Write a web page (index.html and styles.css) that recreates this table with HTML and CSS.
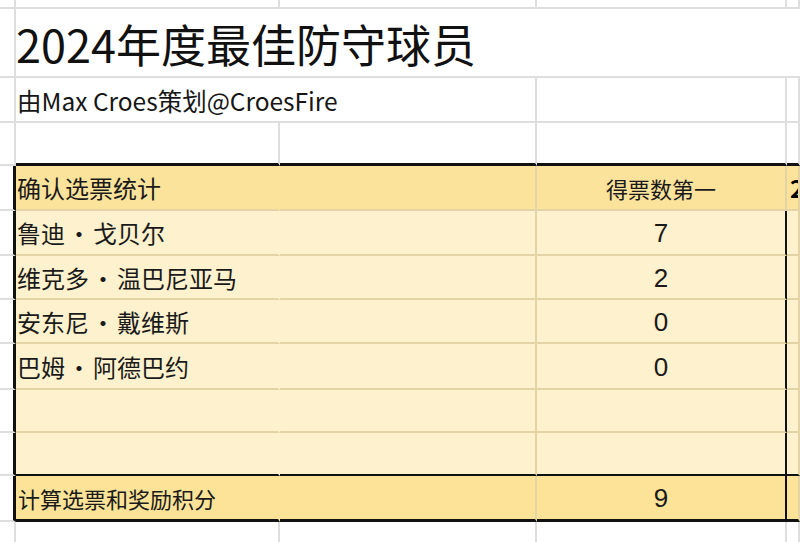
FILE: index.html
```html
<!DOCTYPE html>
<html lang="zh-CN">
<head>
<meta charset="utf-8">
<title>2024年度最佳防守球员</title>
<link rel="stylesheet" href="styles.css">
</head>
<body>
<div class="sheet">
  <div class="row r-top">
    <div class="cell rh"></div><div class="cell ca"></div><div class="cell cb"></div><div class="cell cc"></div><div class="cell cd"></div>
  </div>
  <div class="row r-title">
    <div class="cell rh"></div>
    <div class="cell span-all title">2024年度最佳防守球员</div>
  </div>
  <div class="row r-sub">
    <div class="cell rh"></div>
    <div class="cell span-ab sub">由Max Croes策划@CroesFire</div>
    <div class="cell cc"></div><div class="cell cd"></div>
  </div>
  <div class="row r-gap above">
    <div class="cell rh"></div><div class="cell ca"></div><div class="cell cb"></div><div class="cell cc"></div><div class="cell cd"></div>
  </div>
  <div class="row t head h45">
    <div class="cell rh"></div>
    <div class="cell ca label">确认选票统计</div>
    <div class="cell cb"></div>
    <div class="cell cc colhead">得票数第一</div>
    <div class="cell cd next">2</div>
  </div>
  <div class="row t data h45">
    <div class="cell rh"></div>
    <div class="cell ca name">鲁迪<span class="dot">·</span>戈贝尔</div>
    <div class="cell cb"></div>
    <div class="cell cc num">7</div>
    <div class="cell cd"></div>
  </div>
  <div class="row t data h44">
    <div class="cell rh"></div>
    <div class="cell ca name">维克多<span class="dot">·</span>温巴尼亚马</div>
    <div class="cell cb"></div>
    <div class="cell cc num">2</div>
    <div class="cell cd"></div>
  </div>
  <div class="row t data h44">
    <div class="cell rh"></div>
    <div class="cell ca name">安东尼<span class="dot">·</span>戴维斯</div>
    <div class="cell cb"></div>
    <div class="cell cc num">0</div>
    <div class="cell cd"></div>
  </div>
  <div class="row t data h46">
    <div class="cell rh"></div>
    <div class="cell ca name">巴姆<span class="dot">·</span>阿德巴约</div>
    <div class="cell cb"></div>
    <div class="cell cc num">0</div>
    <div class="cell cd"></div>
  </div>
  <div class="row t data h43">
    <div class="cell rh"></div><div class="cell ca"></div><div class="cell cb"></div><div class="cell cc"></div><div class="cell cd"></div>
  </div>
  <div class="row t data last h43">
    <div class="cell rh"></div><div class="cell ca"></div><div class="cell cb"></div><div class="cell cc"></div><div class="cell cd"></div>
  </div>
  <div class="row t total h46">
    <div class="cell rh"></div>
    <div class="cell ca label-sm">计算选票和奖励积分</div>
    <div class="cell cb"></div>
    <div class="cell cc num">9</div>
    <div class="cell cd"></div>
  </div>
  <div class="row r-end">
    <div class="cell rh"></div><div class="cell ca"></div><div class="cell cb"></div><div class="cell cc"></div><div class="cell cd"></div>
  </div>
</div>
</body>
</html>
```
FILE: styles.css
```css
html, body {
  margin: 0;
  padding: 0;
  background: #ffffff;
}

body {
  width: 800px;
  height: 542px;
  overflow: hidden;
  font-family: "Noto Sans CJK SC", "Noto Sans", sans-serif;
  color: #1a1a1a;
}

.sheet {
  width: 800px;
}

.row {
  display: grid;
  grid-template-columns: 16px 264px 257px 250px 1fr;
}

.cell {
  box-sizing: border-box;
  border-right: 2px solid #dedede;
  border-bottom: 2px solid #dedede;
  min-width: 0;
  overflow: hidden;
  white-space: nowrap;
  display: flex;
  align-items: center;
}

.r-top { height: 9px; }
.r-title { height: 69px; }
.r-sub { height: 45px; }
.r-gap { height: 43px; }
.r-end { height: 30px; }
.h43 { height: 43px; }
.h44 { height: 44px; }
.h45 { height: 45px; }
.h46 { height: 46px; }

.span-all {
  grid-column: 2 / -1;
  border-right: none;
}

.span-ab {
  grid-column: 2 / 4;
}

.title {
  font-size: 45px;
  color: #111111;
  padding-left: 0;
  padding-top: 1px;
}

.sub {
  font-size: 24.5px;
  color: #161616;
  padding-left: 1px;
  padding-top: 2px;
}

.above .ca,
.above .cb,
.above .cc,
.above .cd {
  border-bottom: 3px solid #111111;
}

/* table area */
.t .rh {
  border-right: 3px solid #111111;
}

.t .ca,
.t .cb,
.t .cc,
.t .cd {
  border-right: 2px solid #e4d3a4;
  border-bottom: 2px solid #e4d3a4;
}

.t .ca {
  border-right-color: transparent;
  overflow: visible;
}

.t.head .ca,
.t.head .cb,
.t.head .cc,
.t.head .cd {
  background: #fce39c;
}

.t.data .ca,
.t.data .cb,
.t.data .cc,
.t.data .cd {
  background: #fef1cd;
}

.t.total .ca,
.t.total .cb,
.t.total .cc,
.t.total .cd {
  background: #fce398;
}

.t.data .cc,
.t.total .cc {
  border-right: 2px solid #111111;
}

.t.data.last .ca,
.t.data.last .cb,
.t.data.last .cc,
.t.data.last .cd {
  border-bottom: 2px solid #111111;
}

.t.total .ca,
.t.total .cb,
.t.total .cc,
.t.total .cd {
  border-bottom: 3px solid #111111;
}

.label,
.name {
  font-size: 24px;
  padding-left: 1px;
}

.dot {
  padding: 0 2px;
}

.label-sm {
  font-size: 22px;
  padding-left: 2px;
}

.colhead {
  font-size: 22px;
  justify-content: center;
}

.next {
  font-size: 24px;
  font-weight: 700;
  padding-left: 3px;
  color: #000000;
}

.num {
  font-family: "Liberation Sans", Arial, sans-serif;
  font-size: 26px;
  justify-content: center;
  padding-top: 2px;
}
```
